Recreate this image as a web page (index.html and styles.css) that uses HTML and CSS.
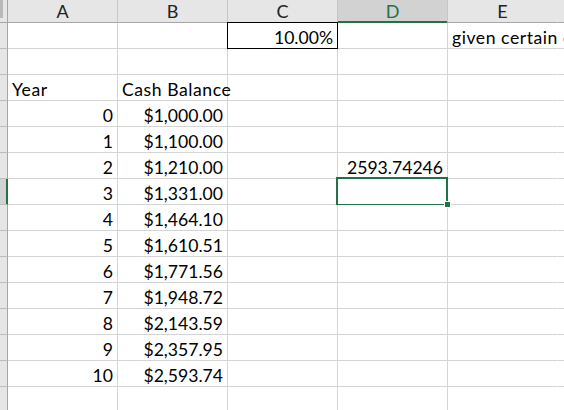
FILE: index.html
```html
<!DOCTYPE html>
<html>
<head>
<meta charset="utf-8">
<link rel="stylesheet" href="styles.css">
</head>
<body>
<div class="sheet">
  <div class="corner"><span class="tri"></span></div>
  <div class="ch">A</div><div class="ch">B</div><div class="ch">C</div><div class="ch active">D</div><div class="ch">E</div><div class="ch"></div>

  <div class="rh"></div><div class="c"></div><div class="c"></div><div class="c r boxed">10.00%</div><div class="c"></div><div class="c l over">given certain c</div><div class="c"></div>
  <div class="rh"></div><div class="c"></div><div class="c"></div><div class="c"></div><div class="c"></div><div class="c"></div><div class="c"></div>
  <div class="rh"></div><div class="c l">Year</div><div class="c l over">Cash Balance</div><div class="c"></div><div class="c"></div><div class="c"></div><div class="c"></div>
  <div class="rh"></div><div class="c r">0</div><div class="c r">$1,000.00</div><div class="c"></div><div class="c"></div><div class="c"></div><div class="c"></div>
  <div class="rh"></div><div class="c r">1</div><div class="c r">$1,100.00</div><div class="c"></div><div class="c"></div><div class="c"></div><div class="c"></div>
  <div class="rh"></div><div class="c r">2</div><div class="c r">$1,210.00</div><div class="c"></div><div class="c r">2593.74246</div><div class="c"></div><div class="c"></div>
  <div class="rh sel"></div><div class="c r">3</div><div class="c r">$1,331.00</div><div class="c"></div><div class="c selected"><span class="handle"></span></div><div class="c"></div><div class="c"></div>
  <div class="rh"></div><div class="c r">4</div><div class="c r">$1,464.10</div><div class="c"></div><div class="c"></div><div class="c"></div><div class="c"></div>
  <div class="rh"></div><div class="c r">5</div><div class="c r">$1,610.51</div><div class="c"></div><div class="c"></div><div class="c"></div><div class="c"></div>
  <div class="rh"></div><div class="c r">6</div><div class="c r">$1,771.56</div><div class="c"></div><div class="c"></div><div class="c"></div><div class="c"></div>
  <div class="rh"></div><div class="c r">7</div><div class="c r">$1,948.72</div><div class="c"></div><div class="c"></div><div class="c"></div><div class="c"></div>
  <div class="rh"></div><div class="c r">8</div><div class="c r">$2,143.59</div><div class="c"></div><div class="c"></div><div class="c"></div><div class="c"></div>
  <div class="rh"></div><div class="c r">9</div><div class="c r">$2,357.95</div><div class="c"></div><div class="c"></div><div class="c"></div><div class="c"></div>
  <div class="rh"></div><div class="c r">10</div><div class="c r">$2,593.74</div><div class="c"></div><div class="c"></div><div class="c"></div><div class="c"></div>
  <div class="rh"></div><div class="c"></div><div class="c"></div><div class="c"></div><div class="c"></div><div class="c"></div><div class="c"></div>
</div>
</body>
</html>
```
FILE: styles.css
```css
html, body {
  margin: 0;
  padding: 0;
  background: #ffffff;
  overflow: hidden;
  width: 564px;
  height: 410px;
}
.sheet {
  display: grid;
  grid-template-columns: 8px 110px 110px 110px 110px 110px 110px;
  grid-auto-rows: 26px;
  grid-template-rows: 23px;
  font-family: "Lato", "Liberation Sans", sans-serif;
  font-size: 17.6px;
  color: #000;
}
.corner {
  position: relative;
  background: #e6e6e6;
  border-right: 1px solid #a6a6a6;
  border-bottom: 1px solid #a6a6a6;
  box-sizing: border-box;
}
.tri {
  position: absolute;
  left: 0;
  top: 0;
  width: 3px;
  height: 18px;
  background: #b9b9b9;
}
.ch {
  background: #e6e6e6;
  border-right: 1px solid #c6c6c6;
  border-bottom: 1px solid #a6a6a6;
  box-sizing: border-box;
  text-align: center;
  line-height: 22px;
  font-size: 18px;
  color: #222;
}
.ch.active {
  background: #d2d2d2;
  color: #217346;
  border-bottom-color: #217346;
  box-shadow: inset 0 -1px 0 #217346;
}
.rh {
  background: #e6e6e6;
  border-right: 1px solid #a6a6a6;
  border-bottom: 1px solid #bdbdbd;
  box-sizing: border-box;
}
.rh.sel {
  background: #d2d2d2;
  border-right-color: #217346;
  box-shadow: inset -1px 0 0 #217346;
}
.c {
  position: relative;
  background: #fff;
  border-right: 1px solid #d4d4d4;
  border-bottom: 1px solid #d4d4d4;
  box-sizing: border-box;
  display: flex;
  align-items: flex-end;
  line-height: 21px;
  white-space: nowrap;
  padding: 0 4px 0 4px;
}
.sheet > :nth-child(7n+6) {
  border-right-color: transparent;
}
.c.r {
  justify-content: flex-end;
}
.c.l {
  justify-content: flex-start;
  letter-spacing: 0.55px;
}
.c.over {
  overflow: visible;
  z-index: 1;
}
.c.boxed::after {
  content: "";
  position: absolute;
  left: -1px;
  top: -1px;
  right: -1px;
  bottom: -1px;
  border: 1px solid #000;
}
.c.selected::after {
  content: "";
  position: absolute;
  left: -2px;
  top: -2px;
  width: 112px;
  height: 29px;
  box-sizing: border-box;
  border: 2px solid #217346;
}
.handle {
  position: absolute;
  left: 106px;
  top: 22px;
  width: 5px;
  height: 5px;
  background: #217346;
  border: 1px solid #fff;
  z-index: 2;
}
```
